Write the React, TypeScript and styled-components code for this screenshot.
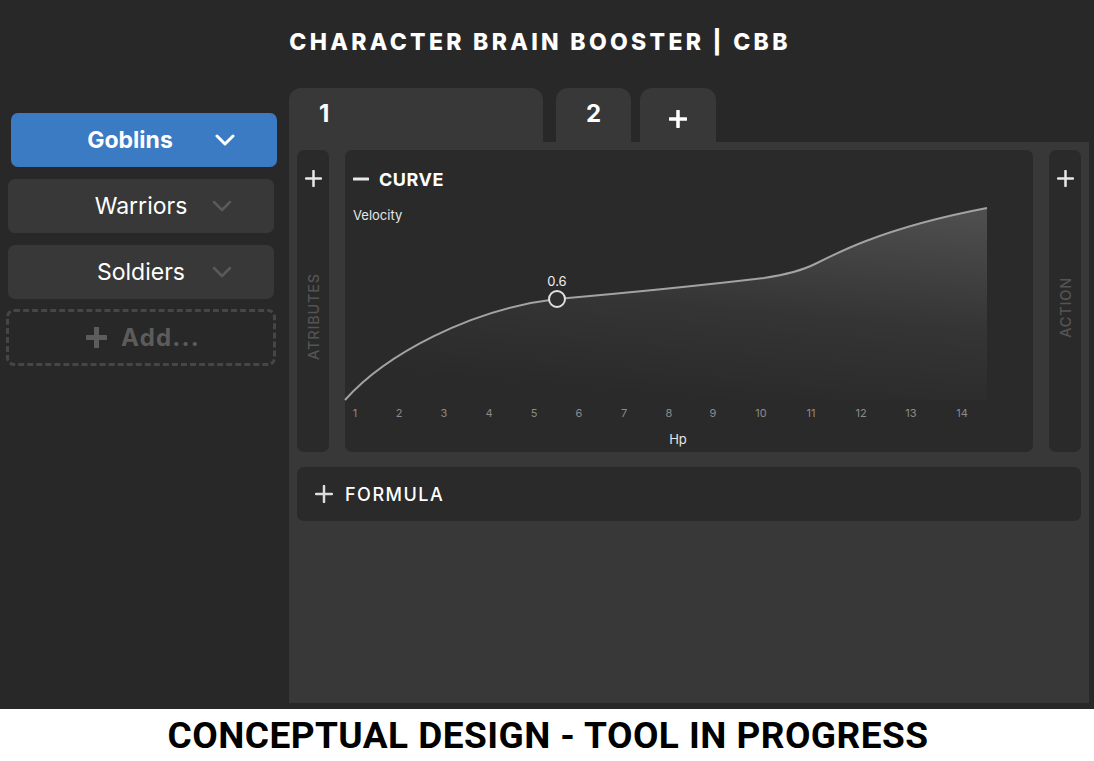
import React from "react";
import styled, { createGlobalStyle } from "styled-components";

const GlobalStyle = createGlobalStyle`
  html, body { margin: 0; padding: 0; background: #282828; }
  body { font-family: Inter, "Noto Sans", sans-serif; color: #fff; }
  * { box-sizing: border-box; }
`;

const Page = styled.div`
  width: 1094px;
  height: 761px;
  display: flex;
  flex-direction: column;
  background: #282828;
  overflow: hidden;
`;

const Header = styled.header`
  height: 88px;
  display: flex;
  align-items: center;
  justify-content: center;
  padding-bottom: 4px;
`;

const Title = styled.h1`
  margin: 0;
  font-family: Inter, sans-serif;
  font-weight: 800;
  font-size: 23px;
  letter-spacing: 3.3px;
  color: #fff;
  padding-right: 14px;
`;

const Body = styled.div`
  flex: 1;
  display: flex;
  padding-right: 5px;
  padding-bottom: 6px;
`;

const Sidebar = styled.aside`
  width: 289px;
  padding: 25px 0 0 8px;
  display: flex;
  flex-direction: column;
`;

const GroupItem = styled.div<{ $active?: boolean }>`
  width: 266px;
  height: 54px;
  border-radius: 7px;
  display: flex;
  align-items: center;
  margin-left: ${(p) => (p.$active ? "3px" : "0")};
  margin-bottom: 12px;
  padding-left: ${(p) => (p.$active ? "34px" : "62px")};
  padding-right: 42px;
  background: ${(p) => (p.$active ? "#3a7bc3" : "#383838")};
  color: #fff;
  font-size: 23px;
  font-weight: ${(p) => (p.$active ? 700 : 400)};
`;

const GroupLabel = styled.span`
  flex: 1;
  text-align: center;
`;

const ChevronBox = styled.span`
  width: 20px;
  display: flex;
  justify-content: center;
`;

const AddButton = styled.div`
  width: 270px;
  height: 57px;
  margin-left: -2px;
  margin-top: -2px;
  border: 3px dashed #464646;
  border-radius: 8px;
  display: flex;
  align-items: center;
  justify-content: center;
  gap: 14px;
  color: #5c5c5c;
  font-size: 24px;
  font-weight: 700;
  letter-spacing: 1.2px;
  padding-left: 4px;
`;

const Main = styled.main`
  width: 800px;
  display: flex;
  flex-direction: column;
`;

const TabRow = styled.div`
  height: 54px;
  display: flex;
  align-items: stretch;
`;

const Tab = styled.div<{ $w: number; $gap: number; $center?: boolean }>`
  width: ${(p) => p.$w}px;
  margin-right: ${(p) => p.$gap}px;
  background: #383838;
  border-radius: 12px 12px 0 0;
  display: flex;
  align-items: flex-start;
  justify-content: ${(p) => (p.$center ? "center" : "flex-start")};
  padding-left: ${(p) => (p.$center ? "0" : "30px")};
  padding-top: 14px;
  font-size: 24px;
  font-weight: 700;
  color: #fff;
  line-height: 24px;
`;

const TabIcon = styled.div`
  padding-top: 6px;
`;

const Panel = styled.section`
  flex: 1;
  background: #383838;
  padding: 8px;
  display: flex;
  flex-direction: column;
  gap: 15px;
`;

const CurveRow = styled.div`
  height: 302px;
  display: flex;
  gap: 16px;
`;

const SideColumn = styled.div`
  width: 32px;
  background: #2a2a2a;
  border-radius: 7px;
  display: flex;
  flex-direction: column;
  align-items: center;
  padding-top: 20px;
`;

const VerticalLabel = styled.div<{ $top: number }>`
  margin-top: ${(p) => p.$top}px;
  writing-mode: vertical-rl;
  transform: rotate(180deg);
  font-family: Inter, sans-serif;
  font-size: 14.5px;
  font-weight: 500;
  letter-spacing: 0.8px;
  color: #545454;
`;

const CurveCard = styled.div`
  flex: 1;
  background: #2a2a2a;
  border-radius: 7px;
  display: flex;
  flex-direction: column;
  padding-top: 18px;
`;

const CardHeader = styled.div`
  height: 22px;
  display: flex;
  align-items: center;
  gap: 10px;
  padding-left: 8px;
  font-size: 18px;
  font-weight: 700;
  letter-spacing: 0.5px;
  color: #fff;
`;

const AxisName = styled.div<{ $center?: boolean }>`
  font-size: 13px;
  line-height: 16px;
  color: #e6e6e6;
  padding-left: ${(p) => (p.$center ? "0" : "8px")};
  padding-right: ${(p) => (p.$center ? "22px" : "0")};
  text-align: ${(p) => (p.$center ? "center" : "left")};
`;

const VelocityLabel = styled(AxisName)`
  margin-top: 17px;
`;

const HpLabel = styled(AxisName)`
  margin-top: 12px;
`;

const ChartSvg = styled.svg`
  display: block;
  overflow: visible;
  width: 688px;
  height: 196px;
`;

const FormulaCard = styled.div`
  height: 54px;
  background: #2a2a2a;
  border-radius: 7px;
  display: flex;
  align-items: center;
  gap: 12px;
  padding-left: 18px;
  font-size: 18px;
  font-weight: 500;
  letter-spacing: 1.5px;
  color: #fff;
`;

const Footer = styled.footer`
  height: 52px;
  background: #fff;
  display: flex;
  align-items: center;
  justify-content: center;
  padding-left: 2px;
`;

const FooterText = styled.div`
  font-family: Roboto, "Liberation Sans", sans-serif;
  font-weight: 700;
  font-size: 37px;
  letter-spacing: 0.45px;
  color: #000;
`;

const Chevron = ({ color, width }: { color: string; width: number }) => (
  <svg width="20" height="12" viewBox="0 0 20 12">
    <path d="M2 2 L10 10 L18 2" fill="none" stroke={color} strokeWidth={width} strokeLinecap="round" strokeLinejoin="round" />
  </svg>
);

const Plus = ({ size, stroke, color }: { size: number; stroke: number; color: string }) => (
  <svg width={size} height={size} viewBox={`0 0 ${size} ${size}`}>
    <path
      d={`M${size / 2} 1 V${size - 1} M1 ${size / 2} H${size - 1}`}
      stroke={color}
      strokeWidth={stroke}
      strokeLinecap="round"
    />
  </svg>
);

const Minus = () => (
  <svg width="16" height="4" viewBox="0 0 16 4">
    <path d="M1 2 H15" stroke="#e8e8e8" strokeWidth="3" strokeLinecap="round" />
  </svg>
);

const xLabels: [string, number][] = [
  ["1", 10], ["2", 54], ["3", 99], ["4", 144], ["5", 189], ["6", 234], ["7", 279],
  ["8", 324], ["9", 368], ["10", 416], ["11", 466], ["12", 516], ["13", 566], ["14", 617],
];

const curvePath =
  "M0,177 C40,132 125,86 212,76 C280,70 360,62 419,55 C445,51 460,46 470,41 C490,31 505,24 521,18 C560,3 600,-7 642,-15";

const CurveChart = () => (
  <ChartSvg viewBox="0 0 688 196">
    <defs>
      <linearGradient id="fillGrad" x1="0.85" y1="0" x2="0.55" y2="1">
        <stop offset="0" stopColor="#ffffff" stopOpacity="0.17" />
        <stop offset="0.55" stopColor="#ffffff" stopOpacity="0.05" />
        <stop offset="1" stopColor="#ffffff" stopOpacity="0" />
      </linearGradient>
    </defs>
    <path d={`${curvePath} L642,177 Z`} fill="url(#fillGrad)" />
    <path d={curvePath} fill="none" stroke="#a3a3a3" strokeWidth="2" />
    <circle cx="212" cy="76" r="8" fill="#2f2f2f" stroke="#e0e0e0" strokeWidth="2" />
    <text x="212" y="59" fill="#eeeeee" fontSize="13" fontFamily="Inter, sans-serif" textAnchor="middle" dominantBaseline="middle">
      0.6
    </text>
    {xLabels.map(([t, x]) => (
      <text key={t} x={x} y="191" fill="#8a8a8a" fontSize="11" fontFamily="Inter, sans-serif" textAnchor="middle" dominantBaseline="middle">
        {t}
      </text>
    ))}
  </ChartSvg>
);

const groups = [
  { name: "Goblins", active: true },
  { name: "Warriors", active: false },
  { name: "Soldiers", active: false },
];

export default function App() {
  return (
    <>
      <GlobalStyle />
      <Page>
        <Header>
          <Title>CHARACTER BRAIN BOOSTER | CBB</Title>
        </Header>
        <Body>
          <Sidebar>
            {groups.map((g) => (
              <GroupItem key={g.name} $active={g.active}>
                <GroupLabel>{g.name}</GroupLabel>
                <ChevronBox>
                  {g.active ? <Chevron color="#ffffff" width={3} /> : <Chevron color="#5a5a5a" width={2.5} />}
                </ChevronBox>
              </GroupItem>
            ))}
            <AddButton>
              <Plus size={21} stroke={5} color="#5c5c5c" />
              <span>Add...</span>
            </AddButton>
          </Sidebar>
          <Main>
            <TabRow>
              <Tab $w={254} $gap={13}>1</Tab>
              <Tab $w={75} $gap={9} $center>2</Tab>
              <Tab $w={76} $gap={0} $center>
                <TabIcon>
                  <Plus size={18} stroke={3.5} color="#ffffff" />
                </TabIcon>
              </Tab>
            </TabRow>
            <Panel>
              <CurveRow>
                <SideColumn>
                  <Plus size={17} stroke={2.5} color="#e8e8e8" />
                  <VerticalLabel $top={86}>ATRIBUTES</VerticalLabel>
                </SideColumn>
                <CurveCard>
                  <CardHeader>
                    <Minus />
                    <span>CURVE</span>
                  </CardHeader>
                  <VelocityLabel>Velocity</VelocityLabel>
                  <CurveChart />
                  <HpLabel $center>Hp</HpLabel>
                </CurveCard>
                <SideColumn>
                  <Plus size={17} stroke={2.5} color="#e8e8e8" />
                  <VerticalLabel $top={90}>ACTION</VerticalLabel>
                </SideColumn>
              </CurveRow>
              <FormulaCard>
                <Plus size={18} stroke={2.5} color="#dddddd" />
                <span>FORMULA</span>
              </FormulaCard>
            </Panel>
          </Main>
        </Body>
        <Footer>
          <FooterText>CONCEPTUAL DESIGN - TOOL IN PROGRESS</FooterText>
        </Footer>
      </Page>
    </>
  );
}
